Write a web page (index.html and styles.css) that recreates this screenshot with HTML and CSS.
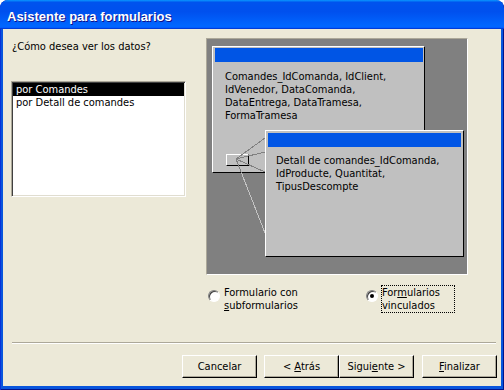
FILE: index.html
```html
<!DOCTYPE html>
<html lang="es">
<head>
    <meta charset="UTF-8">
    <meta name="viewport" content="width=device-width, initial-scale=1.0">
    <title>Asistente para formularios</title>
    <link rel="stylesheet" href="styles.css">
</head>
<body>
    <div class="window">
        <div class="titlebar">Asistente para formularios</div>

        <div class="client">
            <div class="content">
                <div class="left-col">
                    <div class="question">¿Cómo desea ver los datos?</div>
                    <div class="listbox">
                        <div class="list-item selected">por Comandes</div>
                        <div class="list-item">por Detall de comandes</div>
                    </div>
                </div>

                <div class="right-col">
                    <!-- preview picture: main form with linked subform -->
                    <div class="preview">
                        <div class="table table-main">
                            <div class="table-caption"></div>
                            <div class="table-fields">Comandes_IdComanda, IdClient,<br>IdVenedor, DataComanda,<br>DataEntrega, DataTramesa,<br>FormaTramesa</div>
                        </div>
                        <div class="link-button"></div>
                        <svg class="links" width="260" height="235" viewBox="0 0 260 235" shape-rendering="crispEdges">
                            <defs>
                                <clipPath id="inside-main">
                                    <rect x="5" y="7" width="213" height="127"/>
                                </clipPath>
                                <g id="link-lines">
                                    <line x1="29" y1="120" x2="58" y2="99"/>
                                    <line x1="29" y1="120" x2="58" y2="113"/>
                                    <line x1="29" y1="120" x2="58" y2="133"/>
                                    <line x1="29" y1="120" x2="58" y2="194"/>
                                </g>
                            </defs>
                            <use href="#link-lines" class="lines-outside"/>
                            <use href="#link-lines" class="lines-inside" clip-path="url(#inside-main)"/>
                        </svg>
                        <div class="table table-sub">
                            <div class="table-caption"></div>
                            <div class="table-fields">Detall de comandes_IdComanda,<br>IdProducte, Quantitat,<br>TipusDescompte</div>
                        </div>
                    </div>

                    <div class="options">
                        <div class="option option-first">
                            <span class="radio"></span>
                            <span class="option-text">Formulario con<br><u>s</u>ubformularios</span>
                        </div>
                        <div class="option">
                            <span class="radio checked"></span>
                            <span class="option-text focused">For<u>m</u>ularios<br>vinculados</span>
                        </div>
                    </div>
                </div>
            </div>

            <div class="separator"></div>

            <div class="buttons">
                <button class="btn btn-cancel">Cancelar</button>
                <button class="btn">&lt; <u>A</u>trás</button>
                <button class="btn btn-next">Sigui<u>e</u>nte &gt;</button>
                <button class="btn"><u>F</u>inalizar</button>
            </div>
        </div>
    </div>
</body>
</html>
```

FILE: styles.css
```css
html {
    background: #fff;
}
body {
    margin: 0;
    font-family: "DejaVu Sans Condensed", "DejaVu Sans", sans-serif;
    font-size: 11px;
    color: #000;
}
.window {
    width: 504px;
    height: 390px;
    display: flex;
    flex-direction: column;
    background: #0855dd;
    border-radius: 8px 8px 0 0;
    box-shadow: inset 1px 0 #0831d9, inset -1px -1px #00138c;
    overflow: hidden;
}
.titlebar {
    height: 29px;
    box-sizing: border-box;
    padding: 10px 0 0 7px;
    line-height: 13px;
    font-family: "Liberation Sans", Arial, sans-serif;
    font-size: 13px;
    font-weight: bold;
    color: #fff;
    text-shadow: 1px 1px #0f1089;
    background: linear-gradient(180deg, #0997ff, #0053ee 8%, #0050ee 40%, #06f 88%, #06f 93%, #005bff 95%, #003dd7 96%, #003dd7);
    border-radius: 8px 8px 0 0;
}
.client {
    flex: 1;
    display: flex;
    flex-direction: column;
    margin: 0 3px 4px 3px;
    background: #ece9d8;
}
.content {
    flex: 1;
    display: flex;
    padding: 9px 0 0 8px;
}
.left-col {
    width: 175px;
    margin-right: 20px;
}
.question {
    margin-top: 2px;
    padding-left: 1px;
    line-height: 13px;
}
.listbox {
    margin-top: 28px;
    height: 116px;
    box-sizing: border-box;
    background: #fff;
    border: 1px solid;
    border-color: #aca899 #fff #fff #aca899;
    box-shadow: inset 1px 1px #404040, inset -1px -1px #e0ddd0;
    padding: 1px;
}
.list-item {
    height: 13px;
    line-height: 13px;
    padding-left: 3px;
    white-space: nowrap;
}
.list-item.selected {
    background: #000;
    color: #fff;
}

/* preview picture */
.preview {
    position: relative;
    width: 262px;
    height: 237px;
    box-sizing: border-box;
    background: #808080;
    border: 1px solid;
    border-color: #aca899 #fff #fff #aca899;
}
.table {
    position: absolute;
    height: 127px;
    box-sizing: border-box;
    background: #c0c0c0;
    border: 1px solid;
    border-color: #fff #000 #000 #fff;
    padding: 1px 1px 0 2px;
}
.table-main {
    left: 5px;
    top: 7px;
    width: 213px;
}
.table-sub {
    left: 58px;
    top: 91px;
    width: 199px;
    padding-top: 2px;
    padding-right: 2px;
}
.table-caption {
    height: 14px;
    background: #0055e5;
}
.table-fields {
    margin-top: 8px;
    padding-left: 10px;
    line-height: 13px;
    white-space: nowrap;
}
.table-sub .table-fields {
    margin-top: 7px;
    padding-left: 8px;
}
.link-button {
    position: absolute;
    left: 19px;
    top: 115px;
    width: 23px;
    height: 12px;
    box-sizing: border-box;
    border: 1px solid;
    border-color: #fff #000 #000 #fff;
    background: #c0c0c0;
}
.links {
    position: absolute;
    left: 0;
    top: 0;
}
.lines-outside {
    stroke: #c4c4c4;
    stroke-width: 1;
}
.lines-inside {
    stroke: #808080;
    stroke-width: 1;
}

/* radio options */
.options {
    display: flex;
    margin-top: 10px;
}
.option {
    display: flex;
    align-items: flex-start;
    gap: 3px;
}
.option-first {
    width: 158px;
    margin-left: 2px;
}
.radio {
    width: 12px;
    height: 12px;
    margin-top: 5px;
    box-sizing: border-box;
    border-radius: 50%;
    border: 1px solid;
    border-color: #808080 #fff #fff #808080;
    box-shadow: inset 1px 1px #404040;
    background: #fff;
    display: flex;
    align-items: center;
    justify-content: center;
}
.radio.checked::after {
    content: "";
    width: 4px;
    height: 4px;
    border-radius: 50%;
    background: #000;
}
.option-text {
    line-height: 13px;
    border: 1px dotted transparent;
    white-space: nowrap;
}
.option-text.focused {
    width: 72px;
    border-color: #000;
}

.separator {
    height: 2px;
    box-sizing: border-box;
    margin: 0 5px 0 9px;
    border-top: 1px solid #aca899;
    border-bottom: 1px solid #fff;
}
.buttons {
    display: flex;
    justify-content: flex-end;
    margin-top: 11px;
    padding: 0 4px 8px 0;
}
.btn {
    width: 75px;
    height: 23px;
    padding: 0;
    font-family: inherit;
    font-size: 11px;
    color: #000;
    background: #ece9d8;
    border: 1px solid;
    border-color: #fff #000 #000 #fff;
    box-shadow: inset -1px -1px #aca899;
    border-radius: 0;
}
.btn-cancel {
    margin-right: 7px;
}
.btn-next {
    margin-right: 8px;
}
```
